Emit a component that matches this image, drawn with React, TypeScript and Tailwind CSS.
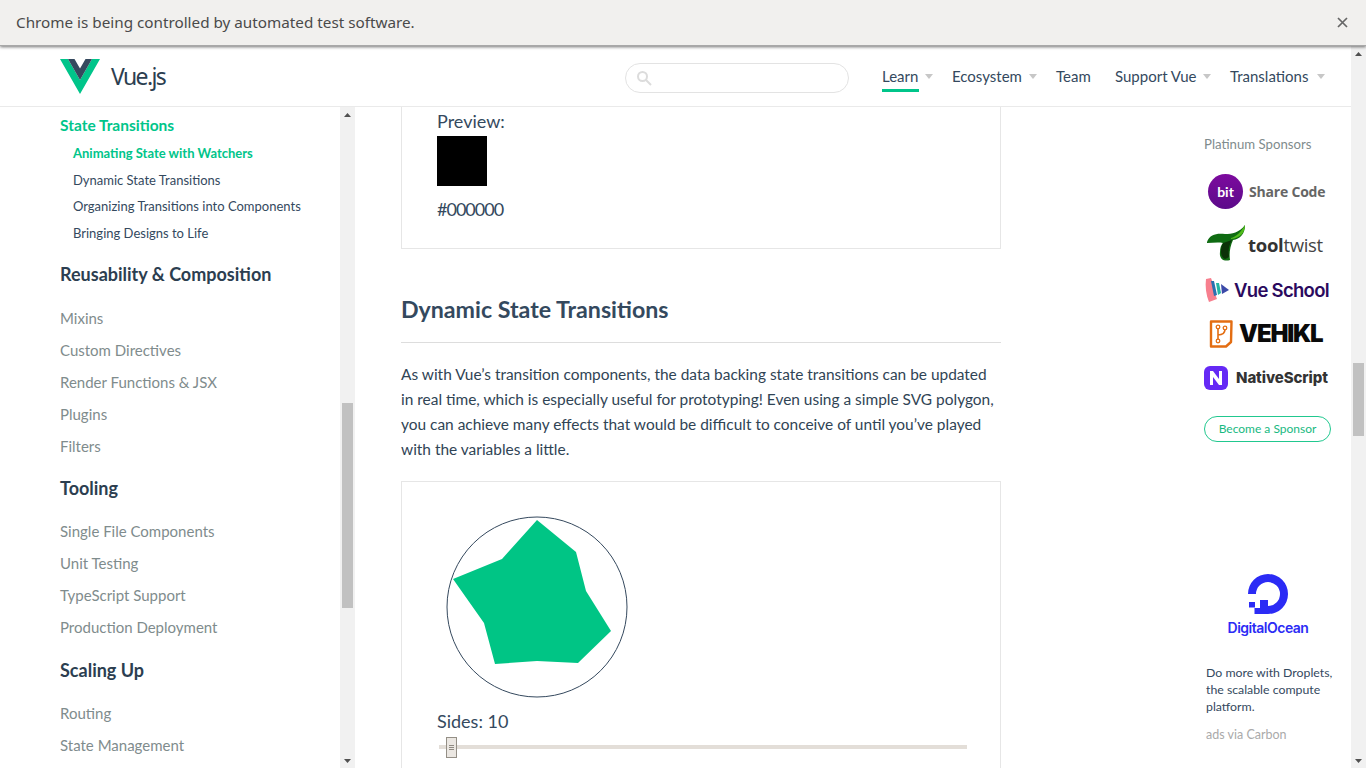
const FONT = "font-['Lato','Noto_Sans',sans-serif]";

const learnGroup = ["Animating State with Watchers", "Dynamic State Transitions", "Organizing Transitions into Components", "Bringing Designs to Life"];

const groups = [
  { title: "Reusability & Composition", cls: "mt-[15px] mb-[15px]", items: ["Mixins", "Custom Directives", "Render Functions & JSX", "Plugins", "Filters"] },
  { title: "Tooling", cls: "mt-[13px] mb-[14px]", items: ["Single File Components", "Unit Testing", "TypeScript Support", "Production Deployment"] },
  { title: "Scaling Up", cls: "mt-[14px] mb-[14px]", items: ["Routing", "State Management"] },
];

const navItems = [
  { label: "Learn", caret: true, active: true, cls: "w-[37px]" },
  { label: "Ecosystem", caret: true, active: false, cls: "w-[71px]" },
  { label: "Team", caret: false, active: false, cls: "w-[40px]" },
  { label: "Support Vue", caret: true, active: false, cls: "w-[82px]" },
  { label: "Translations", caret: true, active: false, cls: "w-[81px]" },
];

function Caret({ up }: { up: boolean }) {
  return (
    <svg width="9" height="6" viewBox="0 0 9 6" className="block">
      <path d={up ? "M4.5 1 8 5H1z" : "M1 1h7L4.5 5z"} fill="#505050" />
    </svg>
  );
}

function Scrollbar({ thumbTop, thumbHeight }: { thumbTop: string; thumbHeight: string }) {
  return (
    <div className="w-[15px] shrink-0 bg-[#f1f1f1] flex flex-col">
      <div className="h-[15px] flex items-center justify-center"><Caret up /></div>
      <div className={`flex-1 ${thumbTop} flex flex-col`}>
        <div className={`${thumbHeight} mx-[2px] bg-[#c1c1c1]`} />
      </div>
      <div className="h-[15px] flex items-center justify-center"><Caret up={false} /></div>
    </div>
  );
}

function Header() {
  return (
    <header className="h-[61px] shrink-0 bg-white border-b border-[#eaeaea] flex items-center pl-[60px] pr-[26px]">
      <svg width="40" height="35" viewBox="0 0 40 35" className="block">
        <path d="M0 0h8l12 21L32 0h8L20 35z" fill="#00c58a" />
        <path d="M8 0h6.5L20 9.5 25.5 0H32L20 21z" fill="#35495e" />
      </svg>
      <span className="ml-[11px] text-[23px] leading-none text-[#2c3e50] font-['Noto_Sans',sans-serif] tracking-[-1.6px]">Vue.js</span>
      <div className="ml-auto mt-[4px] w-[224px] h-[30px] rounded-[15px] border border-[#e3e3e3] flex items-center pl-[10px]">
        <svg width="16" height="16" viewBox="0 0 16 16" fill="none" stroke="#dcdcdc" strokeWidth="2" className="block">
          <circle cx="6.5" cy="6.5" r="4.5" />
          <path d="m10 10 5 5" />
        </svg>
      </div>
      <nav className="ml-[33px] flex items-center h-full gap-[19px]">
        {navItems.map((item) => (
          <div key={item.label} className="flex items-center">
            <span className={`${item.cls} h-[30px] leading-[28px] text-[15px] whitespace-nowrap text-[#34495e] mt-[2px] ${item.active ? "border-b-[3px] border-[#00c58a]" : ""}`}>
              {item.label}
            </span>
            {item.caret && (
              <svg width="8" height="5" viewBox="0 0 8 5" className="block ml-[6px]">
                <path d="M0 0h8L4 5z" fill="#c7c7c7" />
              </svg>
            )}
          </div>
        ))}
      </nav>
    </header>
  );
}

function Sidebar() {
  return (
    <aside className="w-[355px] shrink-0 flex overflow-hidden">
      <div className="flex-1 pl-[60px] pt-[8px] overflow-hidden">
        <div className="text-[15.5px] leading-[20px] font-bold text-[#00c58a]">State Transitions</div>
        <ul className="pl-[13px] mt-[5px] text-[13px] leading-[26.6px] text-[#34495e]">
          {learnGroup.map((item, i) => (
            <li key={item} className={`whitespace-nowrap ${i === 0 ? "font-bold text-[#00c58a]" : ""}`}>{item}</li>
          ))}
        </ul>
        {groups.map((group) => (
          <div key={group.title}>
            <h3 className={`${group.cls} text-[18px] leading-[26px] font-bold text-[#2c3e50] whitespace-nowrap`}>{group.title}</h3>
            <ul className="text-[15px] leading-[32px] text-[#7f8c8d]">
              {group.items.map((item) => <li key={item} className="whitespace-nowrap">{item}</li>)}
            </ul>
          </div>
        ))}
      </div>
      <Scrollbar thumbTop="pt-[281px]" thumbHeight="h-[205px]" />
    </aside>
  );
}

function Content() {
  return (
    <main className="w-[646px] shrink-0 pl-[46px] overflow-hidden text-[#2c3e50]">
      <div className="w-[600px] h-[142px] border border-t-0 border-[#e6e6e6] pl-[35px] text-[18px] leading-[28px] text-[#34495e]">
        <div>Preview:</div>
        <div className="w-[50px] h-[50px] bg-black mt-[1px]" />
        <div className="mt-[9px] tracking-[-1px]">#000000</div>
      </div>
      <h2 className="mt-[42px] w-[600px] pb-[15px] border-b border-[#dddddd] text-[23.2px] leading-[36px] font-bold text-[#34495e] whitespace-nowrap">Dynamic State Transitions</h2>
      <p className="mt-[19px] w-[600px] text-[15.45px] leading-[25px] text-[#304455] whitespace-nowrap">
        As with Vue’s transition components, the data backing state transitions can be updated<br />
        in real time, which is especially useful for prototyping! Even using a simple SVG polygon,<br />
        you can achieve many effects that would be difficult to conceive of until you’ve played<br />
        with the variables a little.
      </p>
      <div className="mt-[19px] w-[600px] h-[300px] border border-[#e6e6e6] pl-[35px] pt-[25px]">
        <svg width="200" height="200" viewBox="0 0 200 200" className="block">
          <circle cx="100" cy="100" r="90" fill="none" stroke="#35495e" strokeWidth="1" />
          <polygon points="100,13 139,45 149,84 174,124 141,156 100,154 58,157 47,116 16,72 65,52" fill="#00c585" />
        </svg>
        <div className="mt-[1px] text-[18px] leading-[26px] text-[#34495e]">Sides: 10</div>
        <div className="relative ml-[2px] mt-[11px] w-[528px] h-[4px] bg-[#e3ded8]">
          <div className="absolute left-[7px] top-[-8px] w-[11px] h-[21px] bg-[#ebe7e2] border border-[#948f86] flex flex-col items-center justify-center gap-[1px]">
            <span className="block w-[5px] h-px bg-[#8f8a82]" />
            <span className="block w-[5px] h-px bg-[#8f8a82]" />
            <span className="block w-[5px] h-px bg-[#8f8a82]" />
          </div>
        </div>
      </div>
    </main>
  );
}

function SponsorLogos() {
  return (
    <div className="flex flex-col">
      <div className="flex items-center h-[36px] ml-[4px] mt-[20px]">
        <div className="w-[35px] h-[35px] rounded-full bg-linear-to-b from-[#7d0a9e] to-[#5c0a8a] flex items-center justify-center text-white text-[14px] font-bold">bit</div>
        <span className="ml-[6px] text-[14px] font-bold text-[#666666] whitespace-nowrap font-['Open_Sans',sans-serif] tracking-[-0.2px]">Share Code</span>
      </div>
      <div className="flex items-center h-[38px] ml-[3px] mt-[15px]">
        <svg width="42" height="36" viewBox="0 0 42 36" className="block">
          <path d="M0 17C3 9 10 8 18 9 25 9 32 8 38 0c0 9-5 14-12 15-3 7-4 13-3 20-6 2-11-1-10-8 0-4 1-7 3-9-5-1-11 0-16 0z" fill="#0f6b12" />
          <path d="M16 18c-3 6-3 14 2 16 3-1 4-2 4-3-1-6 0-11 3-16z" fill="#0b3208" />
          <path d="M24 13c5-1 10-6 14-13 0 8-5 13-14 14z" fill="#4fbb1a" />
        </svg>
        <span className="ml-[-1px] mt-[4px] text-[18.5px] text-[#444444] whitespace-nowrap font-['Open_Sans',sans-serif] tracking-[-0.3px]"><b className="text-[#333333]">tool</b>twist</span>
      </div>
      <div className="flex items-center h-[26px] ml-[1px] mt-[15px]">
        <svg width="26" height="26" viewBox="0 0 26 26" className="block">
          <path d="M1 2 6 1c3 7 4 16 6 21l-8 3C1 18 0 9 1 2z" fill="#f77f8e" />
          <path d="M6 4h3l3 14-3 1z" fill="#2a6fb0" />
          <path d="M11 6l3 0 2 10-3 2z" fill="#23b5a4" />
          <path d="M16 7l8 6-7 4z" fill="#3b4aa8" />
        </svg>
        <span className="ml-[3px] mt-[2px] text-[18.5px] font-semibold text-[#2b0a5e] whitespace-nowrap font-['Inter',sans-serif] tracking-[-0.7px]">Vue School</span>
      </div>
      <div className="flex items-center h-[30px] ml-[4px] mt-[16px]">
        <svg width="26" height="28" viewBox="0 0 26 28" fill="none" className="block">
          <path d="M3 1.5h20.500L23 22l-5 4.500H3z" stroke="#e36d12" strokeWidth="2.4" strokeLinejoin="round" />
          <path d="M10 8v12M10 15c5 0 7-2 7-6" stroke="#e36d12" strokeWidth="1.6" />
          <circle cx="10" cy="7" r="1.8" stroke="#e36d12" strokeWidth="1.3" fill="#fff" />
          <circle cx="17" cy="8" r="1.8" stroke="#e36d12" strokeWidth="1.3" fill="#fff" />
          <circle cx="10" cy="21" r="1.8" stroke="#e36d12" strokeWidth="1.3" fill="#fff" />
        </svg>
        <span className="ml-[5px] text-[24px] font-black text-[#0a0a0a] whitespace-nowrap font-['Inter',sans-serif] tracking-[-1.2px]">VEHIKL</span>
      </div>
      <div className="flex items-center h-[24px] mt-[17px]">
        <svg width="24" height="24" viewBox="0 0 24 24" className="block">
          <rect width="24" height="24" rx="6" fill="#6529f5" />
          <path d="M6 19V5h3l6 8V5h3v14h-3L9 11v8z" fill="#fff" />
        </svg>
        <span className="ml-[8px] text-[15px] font-extrabold text-[#333333] whitespace-nowrap font-['Inter',sans-serif] tracking-[-0.1px]">NativeScript</span>
      </div>
    </div>
  );
}

function Sponsors() {
  return (
    <aside className="ml-auto w-[147px] shrink-0 overflow-hidden">
      <div className="mt-[28px] text-[13.2px] leading-[18px] text-[#7f8c8d] whitespace-nowrap">Platinum Sponsors</div>
      <SponsorLogos />
      <div className="mt-[26px] w-[127px] h-[26px] rounded-[13px] border border-[#21c88f] text-[12px] leading-[24px] text-center text-[#18b981] whitespace-nowrap">Become a Sponsor</div>
      <div className="mt-[132px] flex flex-col items-center w-[130px] ml-[-1px]">
        <svg width="40" height="41" viewBox="0 0 40 41" fill="none" className="block">
          <path d="M20 40v-8a12 12 0 1 0-12-12H0a20 20 0 1 1 20 20z" fill="#2b2bf5" />
          <path d="M12 26h8v14h-8zM6.500 34H12v6H6.500zM1 28h6v5.500H1z" fill="#2b2bf5" />
        </svg>
        <span className="mt-[3px] text-[14px] leading-[20px] font-semibold text-[#2b2bf5] whitespace-nowrap font-['Inter',sans-serif] tracking-[-0.5px]">DigitalOcean</span>
      </div>
      <p className="mt-[26px] ml-[2px] text-[12.3px] leading-[17px] text-[#34495e] whitespace-nowrap">
        Do more with Droplets,<br />the scalable compute<br />platform.
      </p>
      <div className="mt-[11px] ml-[2px] text-[12.5px] leading-[17px] text-[#aaaaaa]">ads via Carbon</div>
    </aside>
  );
}

export default function App() {
  return (
    <div className={`h-screen flex flex-col overflow-hidden bg-white ${FONT}`}>
      <div className="relative z-10 h-[46px] shrink-0 bg-[#f1f0ee] flex items-center justify-between pl-[16px] pr-[18px] shadow-[0_1px_3px_rgba(0,0,0,0.55)] border-b border-[#a8a8a8]">
        <span className="text-[15.25px] text-[#4a4a4a] font-['Noto_Sans',sans-serif]">Chrome is being controlled by automated test software.</span>
        <svg width="11" height="11" viewBox="0 0 11 11" stroke="#666" strokeWidth="1.7" className="block"><path d="m1 1 9 9M10 1l-9 9" /></svg>
      </div>
      <div className="flex-1 flex min-h-0">
        <div className="flex-1 flex flex-col min-w-0">
          <Header />
          <div className="flex-1 flex min-h-0">
            <Sidebar />
            <Content />
            <Sponsors />
          </div>
        </div>
        <Scrollbar thumbTop="pt-[302px]" thumbHeight="h-[73px]" />
      </div>
    </div>
  );
}
